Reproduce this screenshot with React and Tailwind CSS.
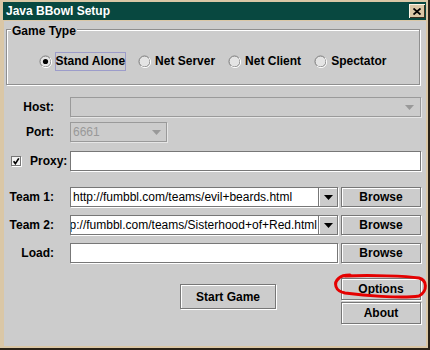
import React from 'react';

function Radio({ checked }) {
  return (
    <svg width="13" height="13" viewBox="0 0 13 13" className="shrink-0">
      <circle cx="6.5" cy="6.5" r="5.5" fill="#e4e4e4" stroke="#7a7a7a" />
      <path d="M3 11 A5 5 0 0 0 11 3" fill="none" stroke="#ffffff" />
      {checked ? <circle cx="6.5" cy="6.5" r="2.6" fill="#000000" /> : null}
    </svg>
  );
}

function Arrow({ color }) {
  return (
    <svg width="9" height="5" viewBox="0 0 9 5" className="shrink-0">
      <path d="M0 0H9L4.5 5Z" fill={color} />
    </svg>
  );
}

function Button({ children, className }) {
  return (
    <button
      type="button"
      className={`flex items-center justify-center border border-[#777777] bg-[#cccccc] text-[12px] font-bold text-black shadow-[inset_1px_1px_0_#ffffff,1px_1px_0_#ffffff] ${className}`}
    >
      {children}
    </button>
  );
}

function Label({ children }) {
  return <div className="w-[50px] shrink-0 text-right text-[12px] font-bold text-black">{children}</div>;
}

function TeamCombo({ value, alignEnd }) {
  return (
    <div className="ml-[16px] flex h-full w-[268px] border border-[#777777] shadow-[1px_1px_0_#ffffff]">
      <div
        className={`flex min-w-0 flex-1 items-center overflow-hidden bg-white pl-[2px] pr-[1px] ${alignEnd ? 'justify-end' : 'justify-start'}`}
      >
        <span className="shrink-0 whitespace-nowrap text-[12px] text-black">{value}</span>
      </div>
      <div className="flex w-[19px] items-center justify-center border-l border-[#777777] bg-[#cccccc] shadow-[inset_1px_1px_0_#ffffff]">
        <Arrow color="#000000" />
      </div>
    </div>
  );
}

const RADIOS = [
  { label: 'Stand Alone', checked: true },
  { label: 'Net Server' },
  { label: 'Net Client' },
  { label: 'Spectator' }
];

export default function App() {
  return (
    <div className="flex h-[350px] w-[430px] flex-col border-b-2 border-r-2 border-[#2a2218] bg-[#dac7a6] pl-[3px] pr-[2px] pt-[2px] pb-[2px] font-['Liberation_Sans',Arial,sans-serif]">
      {/* title bar */}
      <div className="flex h-[18px] shrink-0 items-center justify-between bg-[#084840] pl-[3px] pr-[1px]">
        <span className="text-[12px] font-bold leading-none text-white">Java BBowl Setup</span>
        <div className="flex h-[14px] w-[16px] items-center justify-center bg-[#dac7a6] shadow-[inset_1px_1px_0_#fff6e6,inset_-1px_-1px_0_#3a3020]">
          <svg width="8" height="7" viewBox="0 0 8 7">
            <path d="M0.5 0.5L7.5 6.5M7.5 0.5L0.5 6.5" stroke="#000000" strokeWidth="1.8" />
          </svg>
        </div>
      </div>

      {/* content */}
      <div className="relative mt-[1px] ml-[1px] flex-1 bg-[#cccccc]">
        {/* Game Type group */}
        <div className="ml-[2px] mt-[8px] h-[56px] w-[414px] border border-[#8f8f8f] shadow-[inset_1px_1px_0_#ffffff,1px_1px_0_#ffffff]">
          <div className="-mt-[6px] ml-[4px] w-fit bg-[#cccccc] px-[1px] text-[12px] font-bold leading-[14px] text-black">
            Game Type
          </div>
          <div className="mt-[14px] flex items-center justify-center gap-[12px]">
            {RADIOS.map((r) => (
              <div key={r.label} className="flex items-center gap-[3px]">
                <Radio checked={r.checked} />
                <span
                  className={`border text-[12px] font-bold leading-[17px] text-black ${r.checked ? 'border-[#9c9cca]' : 'border-transparent'}`}
                >
                  {r.label}
                </span>
              </div>
            ))}
          </div>
        </div>

        {/* Host */}
        <div className="mt-[12px] flex h-[20px] items-center">
          <Label>Host:</Label>
          <div className="ml-[16px] flex h-full w-[351px] items-center justify-end border border-[#9a9a9a] pr-[6px] shadow-[1px_1px_0_#e6e6e6]">
            <Arrow color="#999999" />
          </div>
        </div>

        {/* Port */}
        <div className="mt-[5px] flex h-[20px] items-center">
          <Label>Port:</Label>
          <div className="ml-[16px] flex h-full w-[97px] items-center justify-between border border-[#9a9a9a] pl-[2px] pr-[5px] shadow-[1px_1px_0_#e6e6e6]">
            <span className="text-[12px] text-[#999999]">6661</span>
            <Arrow color="#999999" />
          </div>
        </div>

        {/* Proxy */}
        <div className="mt-[9px] flex h-[20px] items-center">
          <div className="flex w-[66px] shrink-0 items-center gap-[8px] pl-[7px]">
            <svg width="11" height="11" viewBox="0 0 11 11" className="shrink-0">
              <rect x="0.5" y="0.5" width="9" height="9" fill="#f2f2f2" stroke="#777777" />
              <path d="M10.5 1V10.5H1" stroke="#ffffff" fill="none" />
              <path d="M2.6 5.2L4.4 7.6L7.8 2.4" stroke="#000000" strokeWidth="1.7" fill="none" />
            </svg>
            <span className="text-[12px] font-bold text-black">Proxy:</span>
          </div>
          <div className="h-full w-[351px] border border-[#777777] bg-white shadow-[1px_1px_0_#ffffff]" />
        </div>

        {/* Team 1 */}
        <div className="mt-[16px] flex h-[20px] items-center">
          <Label>Team 1:</Label>
          <TeamCombo value="http://fumbbl.com/teams/evil+beards.html" />
          <Button className="ml-[3px] h-full w-[80px]">Browse</Button>
        </div>

        {/* Team 2 */}
        <div className="mt-[8px] flex h-[20px] items-center">
          <Label>Team 2:</Label>
          <TeamCombo value="http://fumbbl.com/teams/Sisterhood+of+Red.html" alignEnd />
          <Button className="ml-[3px] h-full w-[80px]">Browse</Button>
        </div>

        {/* Load */}
        <div className="mt-[8px] flex h-[20px] items-center">
          <Label>Load:</Label>
          <div className="ml-[16px] h-full w-[268px] border border-[#777777] bg-white shadow-[1px_1px_0_#ffffff]" />
          <Button className="ml-[3px] h-full w-[80px]">Browse</Button>
        </div>

        {/* bottom buttons */}
        <div className="mt-[15px] flex items-start">
          <Button className="ml-[176px] mt-[6px] h-[25px] w-[96px]">Start Game</Button>
          <div className="ml-[65px] flex w-[80px] flex-col gap-[2px]">
            <Button className="h-[22px] w-full">Options</Button>
            <Button className="h-[22px] w-full">About</Button>
          </div>
        </div>

        {/* red annotation circle */}
        <svg
          className="pointer-events-none absolute left-[327px] top-[252px]"
          width="100"
          height="30"
          viewBox="0 0 100 30"
        >
          <path
            d="M14 3C40 2 75 3 88 5C96 7 97 18 88 23C70 26 30 22 14 20C4 18 2 10 8 5C10 3 14 2 19 2"
            fill="none"
            stroke="#e50000"
            strokeWidth="3"
            strokeLinecap="round"
          />
        </svg>
      </div>
    </div>
  );
}
